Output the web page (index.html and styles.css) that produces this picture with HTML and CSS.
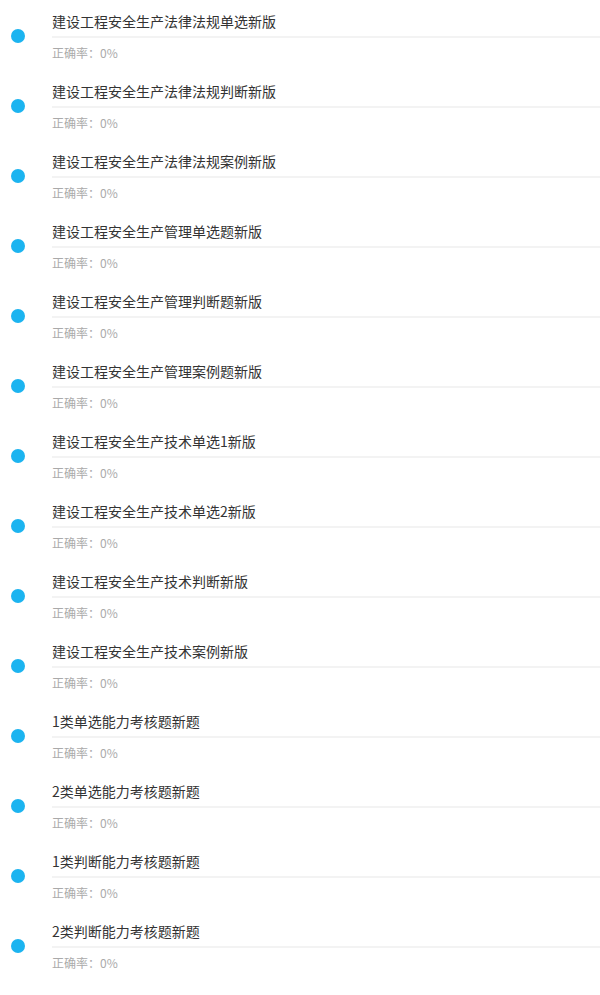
FILE: index.html
```html
<!DOCTYPE html>
<html lang="zh">
<head>
<meta charset="utf-8">
<link rel="stylesheet" href="styles.css">
</head>
<body>
<ul class="list">
  <li class="item"><span class="dot"></span><div class="body"><div class="title">建设工程安全生产法律法规单选新版</div><div class="rule"></div><div class="rate">正确率：0%</div></div></li>
  <li class="item"><span class="dot"></span><div class="body"><div class="title">建设工程安全生产法律法规判断新版</div><div class="rule"></div><div class="rate">正确率：0%</div></div></li>
  <li class="item"><span class="dot"></span><div class="body"><div class="title">建设工程安全生产法律法规案例新版</div><div class="rule"></div><div class="rate">正确率：0%</div></div></li>
  <li class="item"><span class="dot"></span><div class="body"><div class="title">建设工程安全生产管理单选题新版</div><div class="rule"></div><div class="rate">正确率：0%</div></div></li>
  <li class="item"><span class="dot"></span><div class="body"><div class="title">建设工程安全生产管理判断题新版</div><div class="rule"></div><div class="rate">正确率：0%</div></div></li>
  <li class="item"><span class="dot"></span><div class="body"><div class="title">建设工程安全生产管理案例题新版</div><div class="rule"></div><div class="rate">正确率：0%</div></div></li>
  <li class="item"><span class="dot"></span><div class="body"><div class="title">建设工程安全生产技术单选1新版</div><div class="rule"></div><div class="rate">正确率：0%</div></div></li>
  <li class="item"><span class="dot"></span><div class="body"><div class="title">建设工程安全生产技术单选2新版</div><div class="rule"></div><div class="rate">正确率：0%</div></div></li>
  <li class="item"><span class="dot"></span><div class="body"><div class="title">建设工程安全生产技术判断新版</div><div class="rule"></div><div class="rate">正确率：0%</div></div></li>
  <li class="item"><span class="dot"></span><div class="body"><div class="title">建设工程安全生产技术案例新版</div><div class="rule"></div><div class="rate">正确率：0%</div></div></li>
  <li class="item"><span class="dot"></span><div class="body"><div class="title">1类单选能力考核题新题</div><div class="rule"></div><div class="rate">正确率：0%</div></div></li>
  <li class="item"><span class="dot"></span><div class="body"><div class="title">2类单选能力考核题新题</div><div class="rule"></div><div class="rate">正确率：0%</div></div></li>
  <li class="item"><span class="dot"></span><div class="body"><div class="title">1类判断能力考核题新题</div><div class="rule"></div><div class="rate">正确率：0%</div></div></li>
  <li class="item"><span class="dot"></span><div class="body"><div class="title">2类判断能力考核题新题</div><div class="rule"></div><div class="rate">正确率：0%</div></div></li>
</ul>
</body>
</html>
```
FILE: styles.css
```css
html, body {
  margin: 0;
  padding: 0;
  background: #ffffff;
}
body {
  font-family: "Noto Sans CJK SC", sans-serif;
}
.list {
  list-style: none;
  margin: 0;
  padding: 0;
}
.item {
  display: flex;
  align-items: center;
  height: 70px;
  box-sizing: border-box;
}
.dot {
  flex: none;
  width: 14px;
  height: 14px;
  border-radius: 50%;
  background: #1cb4f0;
  margin-left: 11px;
  margin-right: 27px;
  margin-top: 1px;
}
.body {
  flex: 1;
  display: flex;
  flex-direction: column;
  padding-top: 11px;
  padding-bottom: 8px;
  box-sizing: border-box;
  height: 70px;
}
.title {
  font-size: 14px;
  line-height: 20px;
  color: #333333;
}
.rule {
  height: 2px;
  background: #f3f3f3;
  margin-top: 5px;
}
.rate {
  margin-top: 7px;
  font-size: 12px;
  line-height: 16px;
  color: #aaaaaa;
}
```
